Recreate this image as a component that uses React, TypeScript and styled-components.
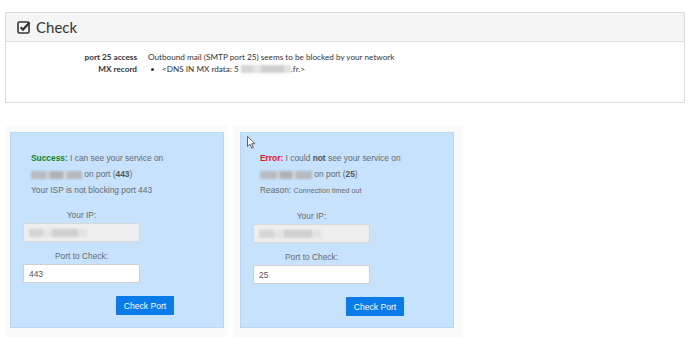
import styled, { createGlobalStyle } from "styled-components";

const GlobalStyle = createGlobalStyle`
  html, body {
    margin: 0;
    padding: 0;
    background: #ffffff;
  }
`;

const Page = styled.div`
  width: 690px;
  height: 342px;
  padding: 12px 5px 0 5px;
  box-sizing: border-box;
  position: relative;
  overflow: hidden;
`;

const Panel = styled.section`
  border: 1px solid #dddddd;
  background: #ffffff;
  font-family: Lato, "Open Sans", sans-serif;
`;

const PanelHeader = styled.div`
  height: 28px;
  background: #f5f5f5;
  border-bottom: 1px solid #dddddd;
  display: flex;
  align-items: center;
  gap: 5px;
  padding-left: 11px;
  color: #333333;
  font-size: 15px;
`;

const PanelBody = styled.div`
  height: 60px;
  padding-top: 9px;
  box-sizing: border-box;
  display: grid;
  grid-template-columns: 131px 1fr;
  column-gap: 11px;
  grid-auto-rows: 12px;
  font-size: 8.2px;
  color: #333333;
  line-height: 12px;
`;

const Label = styled.div`
  text-align: right;
  font-weight: 700;
`;

const Value = styled.div`
  white-space: nowrap;
  display: flex;
  align-items: center;
  font-weight: 400;
`;

const Bullet = styled.span`
  display: inline-block;
  width: 3px;
  height: 3px;
  border-radius: 50%;
  background: #333;
  margin: 0 8px 0 3px;
`;

const Blur = styled.span<{ $w: number; $dark?: boolean }>`
  display: inline-block;
  width: ${(p) => p.$w}px;
  height: 8px;
  vertical-align: middle;
  filter: blur(1px);
  background: ${(p) =>
    p.$dark
      ? "linear-gradient(90deg, #b8bcc2 0 30%, #c8ccd2 30% 38%, #aeb3ba 38% 62%, #cfd3d8 62% 70%, #b5b9c0 70% 100%)"
      : "linear-gradient(90deg, #d6d6d6 0 25%, #e4e4e4 25% 40%, #d0d0d0 40% 85%, #e2e2e2 85% 100%)"};
`;

const Cards = styled.div`
  display: flex;
  gap: 5px;
  margin-top: 23px;
`;

const Card = styled.div<{ $left: number; $right: number }>`
  background: #fafafa;
  padding: 6px ${(p) => p.$right}px 9px ${(p) => p.$left}px;
`;

const Box = styled.div`
  width: 214px;
  height: 196px;
  box-sizing: border-box;
  background: #c6e2fd;
  border: 1px solid #b6d7f6;
  padding: 17px 0 0 0;
  font-family: "Liberation Sans", Arial, sans-serif;
  font-size: 8.4px;
  color: #6b6b6b;
`;

const Message = styled.div<{ $indent: number }>`
  padding-left: ${(p) => p.$indent}px;
  line-height: 16px;
`;

const Line = styled.div`
  white-space: nowrap;
`;

const Status = styled.b<{ $ok: boolean }>`
  color: ${(p) => (p.$ok ? "#17851b" : "#e5121d")};
`;

const Strong = styled.b`
  color: #555555;
`;

const Small = styled.span`
  font-size: 7.2px;
`;

const Form = styled.div`
  margin-top: 10px;
  padding-left: 12px;
`;

const FieldLabel = styled.div`
  width: 117px;
  text-align: center;
  line-height: 14px;
  margin-bottom: 1px;
`;

const Input = styled.div<{ $disabled?: boolean }>`
  width: 117px;
  height: 19px;
  box-sizing: border-box;
  border: 1px solid ${(p) => (p.$disabled ? "#d8d8d8" : "#cfcfcf")};
  border-radius: 2px;
  background: ${(p) => (p.$disabled ? "#eeeeee" : "#ffffff")};
  display: flex;
  align-items: center;
  padding-left: 5px;
  color: #555555;
  margin-bottom: 7px;
`;

const Button = styled.button`
  display: block;
  margin: 13px 0 0 93px;
  width: 58px;
  height: 19px;
  border: none;
  border-radius: 1px;
  background: #0a7be8;
  color: #ffffff;
  font-family: "Liberation Sans", Arial, sans-serif;
  font-size: 8.6px;
  padding: 0;
`;

const Cursor = styled.svg`
  position: absolute;
  left: 247px;
  top: 136px;
`;

const CheckSquare = () => (
  <svg width="14" height="14" viewBox="0 0 14 14">
    <rect x="1" y="2" width="11" height="11" rx="1.5" fill="none" stroke="#333" strokeWidth="1.6" />
    <path d="M3.6 7.2 L6 9.6 L12.6 2.4" fill="none" stroke="#333" strokeWidth="2.2" />
  </svg>
);

const PortCard = ({
  ok,
  port,
  left,
  right,
}: {
  ok: boolean;
  port: string;
  left: number;
  right: number;
}) => (
  <Card $left={left} $right={right}>
    <Box>
      <Message $indent={ok ? 20 : 19}>
        {ok ? (
          <Line>
            <Status $ok>Success:</Status> I can see your service on
          </Line>
        ) : (
          <Line>
            <Status $ok={false}>Error:</Status> I could <Strong>not</Strong> see your service on
          </Line>
        )}
        <Line>
          <Blur $w={ok ? 51 : 52} $dark /> on port (<Strong>{port}</Strong>)
        </Line>
        {ok ? (
          <Line>Your ISP is not blocking port 443</Line>
        ) : (
          <Line>
            Reason: <Small>Connection timed out</Small>
          </Line>
        )}
      </Message>
      <Form>
        <FieldLabel>Your IP:</FieldLabel>
        <Input $disabled>
          <Blur $w={ok ? 58 : 62} />
        </Input>
        <FieldLabel>Port to Check:</FieldLabel>
        <Input>{port}</Input>
        <Button>Check Port</Button>
      </Form>
    </Box>
  </Card>
);

export default function App() {
  return (
    <>
      <GlobalStyle />
      <Page>
        <Panel>
          <PanelHeader>
            <CheckSquare />
            Check
          </PanelHeader>
          <PanelBody>
            <Label>port 25 access</Label>
            <Value>Outbound mail (SMTP port 25) seems to be blocked by your network</Value>
            <Label>MX record</Label>
            <Value>
              <Bullet />
              {"<DNS IN MX rdata: 5\u00a0"}
              <Blur $w={50} />
              {".fr.>"}
            </Value>
          </PanelBody>
        </Panel>
        <Cards>
          <PortCard ok port="443" left={5} right={4} />
          <PortCard ok={false} port="25" left={7} right={9} />
        </Cards>
        <Cursor width="9" height="13" viewBox="0 0 9 13">
          <path d="M0.5 0.5 L0.5 10.5 L3 8.2 L4.8 12.2 L6.3 11.5 L4.6 7.7 L8 7.7 Z" fill="#fff" stroke="#555" strokeWidth="0.9" />
        </Cursor>
      </Page>
    </>
  );
}
